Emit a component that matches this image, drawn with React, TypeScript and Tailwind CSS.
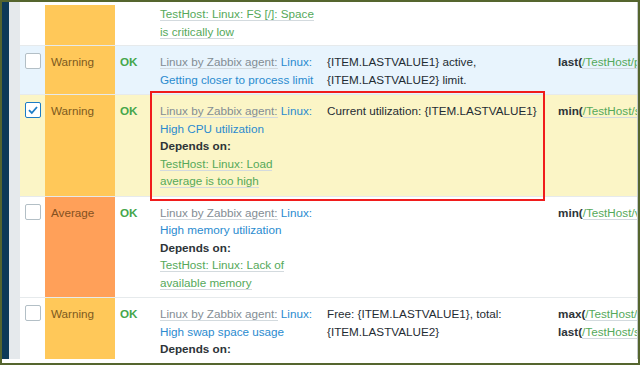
import type { ReactNode } from 'react';

type Row = {
  bg: string;
  severity: 'Warning' | 'Average';
  checked?: boolean;
  pad: string;
  desc: ReactNode;
  opdata?: string[];
  expr?: { fn: string; arg: string }[];
};

const sevClass = {
  Warning: 'bg-[#ffc859] text-[#7d5a1e]',
  Average: 'bg-[#ffa059] text-[#84501f]',
};

const Template = () => (
  <div>
    <span className="border-b border-[#d3dade] text-[#838d94]">Linux by Zabbix agent:</span>{' '}
    <span className="text-[#2a8bcf]">Linux:</span>
  </div>
);

const Blue = ({ children }: { children: ReactNode }) => <div className="text-[#2a8bcf]">{children}</div>;

const Green = ({ children }: { children: ReactNode }) => (
  <div>
    <span className="border-b border-[#d3dade] text-[#55a95a]">{children}</span>
  </div>
);

const Depends = () => <div className="font-bold text-[#2d3438]">Depends on:</div>;

const rows: Row[] = [
  {
    bg: 'bg-white',
    severity: 'Warning',
    pad: 'pt-0 pb-[5px]',
    desc: (
      <>
        <Green>TestHost: Linux: FS [/]: Space</Green>
        <Green>is critically low</Green>
      </>
    ),
  },
  {
    bg: 'bg-[#e8f4fd]',
    severity: 'Warning',
    pad: 'pt-[7px] pb-[6px]',
    desc: (
      <>
        <Template />
        <Blue>Getting closer to process limit</Blue>
      </>
    ),
    opdata: ['{ITEM.LASTVALUE1} active,', '{ITEM.LASTVALUE2} limit.'],
    expr: [{ fn: 'last(', arg: '/TestHost/proc' }],
  },
  {
    bg: 'bg-[#fbf5c6]',
    severity: 'Warning',
    checked: true,
    pad: 'pt-[7px] pb-[6px]',
    desc: (
      <>
        <Template />
        <Blue>High CPU utilization</Blue>
        <Depends />
        <Green>TestHost: Linux: Load</Green>
        <Green>average is too high</Green>
      </>
    ),
    opdata: ['Current utilization: {ITEM.LASTVALUE1}'],
    expr: [{ fn: 'min(', arg: '/TestHost/system' }],
  },
  {
    bg: 'bg-white',
    severity: 'Average',
    pad: 'pt-[7px] pb-[6px]',
    desc: (
      <>
        <Template />
        <Blue>High memory utilization</Blue>
        <Depends />
        <Green>TestHost: Linux: Lack of</Green>
        <Green>available memory</Green>
      </>
    ),
    expr: [{ fn: 'min(', arg: '/TestHost/vm' }],
  },
  {
    bg: 'bg-white',
    severity: 'Warning',
    pad: 'pt-[7px] pb-[6px]',
    desc: (
      <>
        <Template />
        <Blue>High swap space usage</Blue>
        <Depends />
        <Green>TestHost: Linux: Swap</Green>
      </>
    ),
    opdata: ['Free: {ITEM.LASTVALUE1}, total:', '{ITEM.LASTVALUE2}'],
    expr: [
      { fn: 'max(', arg: '/TestHost/system' },
      { fn: 'last(', arg: '/TestHost/system' },
    ],
  },
];

function Checkbox({ checked }: { checked?: boolean }) {
  return (
    <div
      className={`flex h-4 w-4 items-center justify-center rounded-[2px] border bg-white ${
        checked ? 'border-[#1b7cc6]' : 'border-[#b3bfc6]'
      }`}
    >
      {checked && (
        <svg viewBox="0 0 12 12" className="h-3 w-3">
          <path d="M2 6.2 L4.8 9 L10 3" fill="none" stroke="#1b7cc6" strokeWidth="1.8" />
        </svg>
      )}
    </div>
  );
}

export default function App() {
  return (
    <div className="relative h-[365px] w-[640px] overflow-hidden border-2 border-[#55652e] bg-white font-['Liberation_Sans',Arial,sans-serif] text-[11.7px] leading-[17.5px] text-[#1f2c33]">
      <div className="flex h-[357px]">
        <div className="w-[7px] shrink-0 bg-[#0e3a58]" />
        <div className="w-[11px] shrink-0 bg-[#e5e9ec]" />
        <div className="flex-1 overflow-hidden border-r border-[#c4c9cc] pt-[3px]">
          {rows.map((row, i) => (
            <div
              key={i}
              className={`grid grid-cols-[25px_70px_40px_167px_231px_1fr] border-b border-[#e6eaec] ${row.bg}`}
            >
              <div className={`pl-[5px] ${row.pad}`}>{i > 0 && <Checkbox checked={row.checked} />}</div>
              <div className={`px-[6px] ${row.pad} ${sevClass[row.severity]}`}>{i > 0 && row.severity}</div>
              <div className={`px-[5px] font-bold text-[#45a64b] ${row.pad}`}>{i > 0 && 'OK'}</div>
              <div className={`whitespace-nowrap px-[5px] ${row.pad}`}>{row.desc}</div>
              <div className={`whitespace-nowrap px-[5px] ${row.pad}`}>
                {row.opdata?.map((l) => (
                  <div key={l}>{l}</div>
                ))}
              </div>
              <div className={`overflow-hidden whitespace-nowrap px-[5px] ${row.pad}`}>
                {row.expr?.map((e, j) => (
                  <div key={j}>
                    <span className="font-bold text-[#2d3438]">{e.fn}</span>
                    <span className="border-b border-[#d3dade] text-[#55a95a]">{e.arg}</span>
                  </div>
                ))}
              </div>
            </div>
          ))}
        </div>
      </div>
      <div className="absolute left-[148px] top-[89px] h-[110px] w-[395px] border-2 border-[#f01c1c]" />
    </div>
  );
}
